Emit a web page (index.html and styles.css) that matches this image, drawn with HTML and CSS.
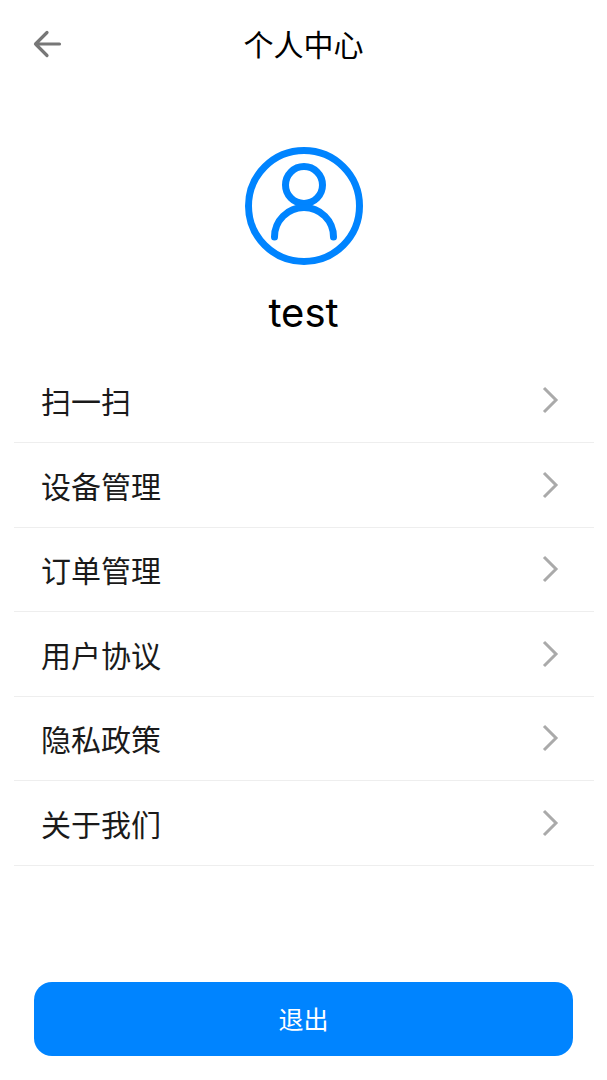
FILE: index.html
```html
<!DOCTYPE html>
<html lang="zh-CN">
<head>
    <meta charset="UTF-8">
    <meta name="viewport" content="width=device-width, initial-scale=1.0">
    <title>个人中心</title>
    <link rel="stylesheet" href="styles.css">
</head>
<body>
    <header class="top-bar">
        <svg class="back-icon" width="30" height="28" viewBox="0 0 30 28">
            <path d="M14 2.500 L2.500 14 L14 25.500 M2.500 14 H26.500" fill="none" stroke="#777" stroke-width="3.200" stroke-linecap="round" stroke-linejoin="round"/>
        </svg>
        <h1 class="page-title">个人中心</h1>
    </header>

    <section class="profile">
        <svg class="avatar" width="118" height="118" viewBox="0 0 118 118">
            <g fill="none" stroke="#0084ff" stroke-width="7" stroke-linecap="round">
                <circle cx="59" cy="59" r="55.500"/>
                <circle cx="59" cy="38" r="18.500"/>
                <path d="M29.500 90 A29.500 29.500 0 0 1 88.500 90"/>
            </g>
        </svg>
        <div class="username">test</div>
    </section>

    <ul class="menu">
        <li class="menu-item"><span>扫一扫</span><svg class="chevron" width="18" height="30" viewBox="0 0 18 30"><path d="M3 3 L15 15 L3 27" fill="none" stroke="#aaa" stroke-width="3"/></svg></li>
        <li class="menu-item"><span>设备管理</span><svg class="chevron" width="18" height="30" viewBox="0 0 18 30"><path d="M3 3 L15 15 L3 27" fill="none" stroke="#aaa" stroke-width="3"/></svg></li>
        <li class="menu-item"><span>订单管理</span><svg class="chevron" width="18" height="30" viewBox="0 0 18 30"><path d="M3 3 L15 15 L3 27" fill="none" stroke="#aaa" stroke-width="3"/></svg></li>
        <li class="menu-item"><span>用户协议</span><svg class="chevron" width="18" height="30" viewBox="0 0 18 30"><path d="M3 3 L15 15 L3 27" fill="none" stroke="#aaa" stroke-width="3"/></svg></li>
        <li class="menu-item"><span>隐私政策</span><svg class="chevron" width="18" height="30" viewBox="0 0 18 30"><path d="M3 3 L15 15 L3 27" fill="none" stroke="#aaa" stroke-width="3"/></svg></li>
        <li class="menu-item"><span>关于我们</span><svg class="chevron" width="18" height="30" viewBox="0 0 18 30"><path d="M3 3 L15 15 L3 27" fill="none" stroke="#aaa" stroke-width="3"/></svg></li>
    </ul>

    <div class="footer">
        <button class="logout" type="button">退出</button>
    </div>
</body>
</html>
```

FILE: styles.css
```css
* {
    box-sizing: border-box;
}
body {
    margin: 0;
    height: 1080px;
    overflow: hidden;
    display: flex;
    flex-direction: column;
    background-color: #fff;
    color: #000;
    font-family: "Liberation Sans", "Noto Sans CJK SC", sans-serif;
}
.top-bar {
    position: relative;
    height: 85px;
    display: flex;
    align-items: center;
    justify-content: center;
}
.back-icon {
    position: absolute;
    left: 33px;
    top: 30px;
}
.page-title {
    margin: 0;
    font-size: 30px;
    font-weight: 400;
}
.profile {
    padding-top: 62px;
    display: flex;
    flex-direction: column;
    align-items: center;
}
.avatar {
    display: block;
}
.username {
    margin-top: 24px;
    font-family: Inter, "Liberation Sans", sans-serif;
    font-size: 40px;
    line-height: 48px;
}
.menu {
    list-style: none;
    margin: 21.5px 13px 0 14px;
    padding: 0;
}
.menu-item {
    height: 84.5px;
    padding: 0 35px 0 27px;
    display: flex;
    align-items: center;
    justify-content: space-between;
    border-bottom: 1px solid #eee;
    font-size: 30px;
    color: #1a1a1a;
}
.footer {
    margin-top: auto;
    padding: 0 34px 24px;
}
.logout {
    display: block;
    width: 100%;
    height: 74px;
    padding: 0 0 2px;
    border: none;
    border-radius: 18px;
    background-color: #0084ff;
    color: #fff;
    font-family: inherit;
    font-size: 25px;
}
```
